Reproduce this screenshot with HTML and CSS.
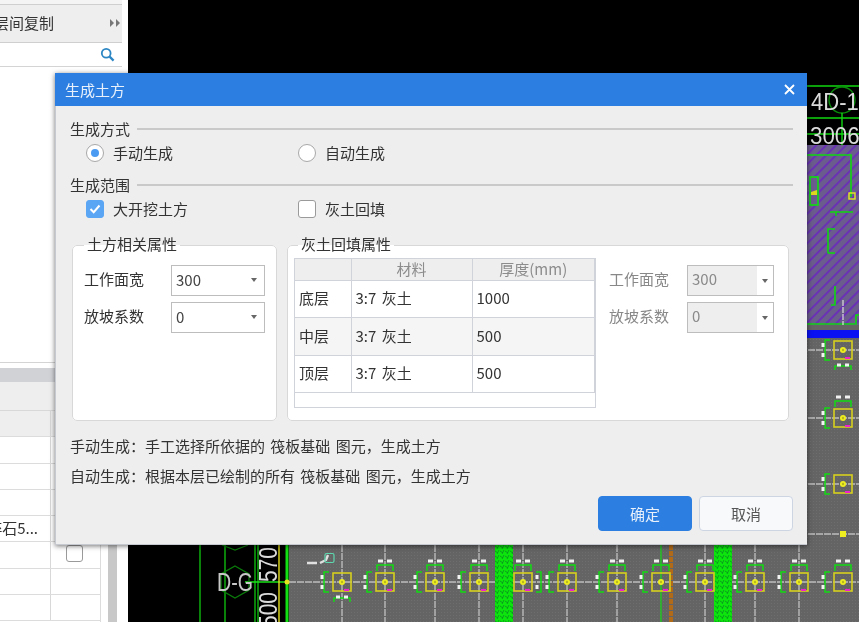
FILE: index.html
```html
<!DOCTYPE html>
<html lang="zh-CN">
<head>
<meta charset="utf-8">
<title>生成土方</title>
<link rel="stylesheet" href="styles.css">
</head>
<body>
<div class="desktop">
  <aside class="panel">
    <div class="panel-top"></div>
    <div class="copy-row"><span class="copy-text">层间复制</span>
      <svg class="more" width="10" height="8" viewBox="0 0 10 8"><path d="M0 0l4 4-4 4zM6 0l4 4-4 4z"/></svg>
    </div>
    <div class="search-row">
      <svg width="15" height="15" viewBox="0 0 15 15"><circle cx="6.2" cy="6.2" r="4.4" fill="none" stroke="#2d86c4" stroke-width="1.8"/><path d="M9.6 9.6l4 4" stroke="#2d86c4" stroke-width="2.2"/></svg>
    </div>
    <div class="panel-list"></div>
    <div class="panel-band"></div>
    <div class="panel-head"></div>
    <div class="panel-lower">
      <div class="prop-table">
        <div class="prop-row prop-header"><span class="prop-a"></span><span class="prop-b"></span></div>
        <div class="prop-row"><span class="prop-a"></span><span class="prop-b"></span></div>
        <div class="prop-row"><span class="prop-a"></span><span class="prop-b"></span></div>
        <div class="prop-row"><span class="prop-a"></span><span class="prop-b"></span></div>
        <div class="prop-row"><span class="prop-a prop-text">碎石5...</span><span class="prop-b"></span></div>
        <div class="prop-row"><span class="prop-a"></span><span class="prop-b"><i class="prop-check"></i></span></div>
        <div class="prop-row"><span class="prop-a"></span><span class="prop-b"></span></div>
        <div class="prop-row"><span class="prop-a"></span><span class="prop-b"></span></div>
      </div>
      <div class="panel-scroll"></div>
    </div>
  </aside>

  <main class="canvas">
    <svg class="cad" width="731" height="622" viewBox="128 0 731 622">
      <defs>
        <pattern id="hatch" width="7" height="7" patternUnits="userSpaceOnUse" patternTransform="rotate(45)">
          <rect width="7" height="7" fill="#6a5c8c"/><rect width="1.8" height="7" fill="#6a2cba"/>
        </pattern>
        <pattern id="grain" width="3" height="3" patternUnits="userSpaceOnUse">
          <rect width="3" height="3" fill="#646464"/><rect width="1" height="1" fill="#6e6e6e"/>
        </pattern>
        <pattern id="leaf" width="5" height="5" patternUnits="userSpaceOnUse">
          <rect width="5" height="5" fill="#0ce60c"/><path d="M0 1l3 2M4 0l-2 4" stroke="#0a8a20" stroke-width=".8"/>
        </pattern>
        <g id="col">
          <rect x="-9" y="-9" width="18" height="18" fill="none" stroke="#d6cf1e" stroke-width="1.6"/>
          <circle r="3" fill="#eeee20"/><circle r="1.2" fill="#b8b820"/>
          <path d="M2 8h5" stroke="#f020d0" stroke-width="2"/>
        </g>
        <g id="bl">
          <path d="M-13-10h-5v20h5" fill="none" stroke="#12dc12" stroke-width="1.5"/>
          <path d="M-20-7v4M-20 3v4" stroke="#f2f2f2" stroke-width="3"/>
        </g>
        <g id="br">
          <path d="M13-10h5v20h-5" fill="none" stroke="#12dc12" stroke-width="1.5"/>
          <path d="M14-7v4M14 3v4" stroke="#f2f2f2" stroke-width="3"/>
        </g>
        <g id="bt">
          <path d="M-8-11v-6h16v6" fill="none" stroke="#12dc12" stroke-width="1.5"/>
          <path d="M-7-21h5M2-21h5" stroke="#f2f2f2" stroke-width="3"/>
        </g>
        <g id="bb">
          <path d="M-8 20v-4h16v4" fill="none" stroke="#12dc12" stroke-width="1.5"/>
          <path d="M-6 15h4M2 15h4" stroke="#f2f2f2" stroke-width="3"/>
        </g>
      </defs>

      <rect x="128" y="0" width="731" height="622" fill="#000"/>

      <!-- upper right: axis labels -->
      <g fill="none" stroke="#10d810" stroke-width="1.4">
        <path d="M807 86H859M807 118H859M807 134H859"/>
        <circle cx="842" cy="100" r="13" stroke="#0a8a0a"/>
        <path d="M842 113V145"/>
      </g>
      <text class="cad-label" x="811" y="110" textLength="60" lengthAdjust="spacingAndGlyphs">4D-15</text>
      <text class="cad-label" x="810" y="144" textLength="62" lengthAdjust="spacingAndGlyphs">30060</text>

      <!-- hatched slab -->
      <rect x="800" y="145" width="59" height="180" fill="url(#hatch)"/>
      <path d="M807 155H851V197" fill="none" stroke="#10d810" stroke-width="1.6"/>
      <rect x="849" y="193" width="6" height="6" fill="none" stroke="#e8e820" stroke-width="1.4"/>
      <rect x="810" y="177" width="8" height="28" fill="#6a5c8c" stroke="#10e010" stroke-width="1.6"/>
      <path d="M811 192l6-2v5h-6z" fill="#e0d820"/>
      <g fill="none" stroke="#10d810" stroke-width="1.6">
        <path d="M830 212H853M836 212v4"/>
        <path d="M835 229h-7v24h7"/>
        <path d="M835 286v19h-4"/>
        <path d="M800 324H856V315H859"/>
      </g>
      <path d="M843 300V622" stroke="#dcdcdc" stroke-width="1.2" stroke-dasharray="6 1"/>
      <rect x="800" y="325" width="59" height="5" fill="#646464"/>
      <rect x="800" y="330" width="59" height="8" fill="#0a12f4"/>

      <!-- lower grey field -->
      <rect x="800" y="338" width="59" height="207" fill="url(#grain)"/>
      <rect x="289" y="545" width="570" height="77" fill="url(#grain)"/>

      <g stroke="#e8e8e8" stroke-width="1.2" stroke-dasharray="7 1">
        <path d="M800 350H859M800 418H859M800 484H859M800 534H859"/>
        <path d="M289 582H859"/>
      </g>
      <path d="M342 545V622M385 545V622M435 545V622M479 545V622M523 545V622M567 545V622M617 545V622M705 545V622M755 545V622M799 545V622" stroke="#c8c8c8" stroke-width="1.2" stroke-dasharray="7 1"/>
      <path d="M661 545V622" stroke="#12dc12" stroke-width="1.2"/>
      <path d="M671 545V622" stroke="#b06a18" stroke-width="4" stroke-dasharray="5 1"/>
      <rect x="495" y="545" width="18" height="77" fill="url(#leaf)"/>
      <rect x="714" y="545" width="18" height="77" fill="url(#leaf)"/>

      <rect x="840" y="531" width="6" height="6" fill="#eeee20"/>
      <use href="#col" x="843" y="350"/><use href="#bl" x="843" y="350"/><use href="#bb" x="843" y="350"/>
      <use href="#col" x="843" y="418"/><use href="#bl" x="843" y="418"/><use href="#bt" x="843" y="418"/>
      <use href="#col" x="843" y="484"/><use href="#bl" x="843" y="484"/>

      <use href="#col" x="342" y="582"/><use href="#bl" x="342" y="582"/><use href="#bb" x="342" y="582"/>
      <use href="#col" x="385" y="582"/><use href="#bl" x="385" y="582"/><use href="#bt" x="385" y="582"/>
      <use href="#col" x="435" y="582"/><use href="#bl" x="435" y="582"/><use href="#bt" x="435" y="582"/>
      <use href="#col" x="479" y="582"/><use href="#bl" x="479" y="582"/><use href="#bt" x="479" y="582"/>
      <use href="#col" x="523" y="582"/><use href="#br" x="523" y="582"/><use href="#bt" x="523" y="582"/>
      <use href="#col" x="567" y="582"/><use href="#bl" x="567" y="582"/><use href="#bt" x="567" y="582"/>
      <use href="#col" x="617" y="582"/><use href="#bl" x="617" y="582"/><use href="#bt" x="617" y="582"/>
      <use href="#col" x="661" y="582"/><use href="#bl" x="661" y="582"/><use href="#bt" x="661" y="582"/>
      <use href="#col" x="705" y="582"/><use href="#bl" x="705" y="582"/><use href="#bt" x="705" y="582"/>
      <use href="#col" x="755" y="582"/><use href="#bl" x="755" y="582"/><use href="#bt" x="755" y="582"/>
      <use href="#col" x="799" y="582"/><use href="#bl" x="799" y="582"/><use href="#bt" x="799" y="582"/>
      <use href="#col" x="843" y="582"/><use href="#bl" x="843" y="582"/><use href="#bt" x="843" y="582"/>

      <path d="M307 563h10M320 563l6-3 2-5" fill="none" stroke="#e0e0e0" stroke-width="2.4"/>
      <rect x="325" y="553.500" width="9" height="9" rx="1.500" fill="none" stroke="#5ed8ae" stroke-width="1.200"/>

      <!-- lower left: axis bubble and dimensions -->
      <g fill="none" stroke="#10c810" stroke-width="1.300">
        <path d="M200 545V622M225 545V622M255 545V622M258 545V622"/>
        <path d="M245 582H287" stroke="#18e018"/>
        <path d="M235 566l14 8v16l-14 8-14-8v-16z" stroke="#0a7a0a"/>
        <path d="M222 545l13 5 13-5" stroke="#0a7a0a"/>
      </g>
      <path d="M279 545V622" stroke="#e6e020" stroke-width="1.400"/>
      <path d="M287 545V622" stroke="#12e012" stroke-width="3"/>
      <circle cx="287" cy="582" r="2.500" fill="#e6e020"/>
      <text class="cad-label cad-axis" x="217" y="591" textLength="36" lengthAdjust="spacingAndGlyphs">D-G</text>
      <text class="cad-label cad-dim" transform="translate(277 582) rotate(-90)" textLength="35" lengthAdjust="spacingAndGlyphs">570</text>
      <text class="cad-label cad-dim" transform="translate(277 627) rotate(-90)" textLength="35" lengthAdjust="spacingAndGlyphs">500</text>
    </svg>
  </main>

  <section class="dialog">
    <header class="dialog-title">
      <span>生成土方</span>
      <svg width="11" height="11" viewBox="0 0 11 11"><path d="M1 1l9 9M10 1l-9 9" stroke="#fff" stroke-width="1.800"/></svg>
    </header>
    <div class="dialog-body">
      <div class="section-label"><span>生成方式</span><i class="rule"></i></div>
      <div class="options">
        <label class="option"><i class="radio radio-on"></i>手动生成</label>
        <label class="option"><i class="radio"></i>自动生成</label>
      </div>
      <div class="section-label section-next"><span>生成范围</span><i class="rule"></i></div>
      <div class="options">
        <label class="option"><i class="check check-on"><svg width="12" height="10" viewBox="0 0 12 10"><path d="M1.500 5l3.200 3.200L10.500 1.500" fill="none" stroke="#fff" stroke-width="2"/></svg></i>大开挖土方</label>
        <label class="option"><i class="check"></i>灰土回填</label>
      </div>

      <div class="groups">
        <fieldset class="group group-left">
          <legend>土方相关属性</legend>
          <div class="fields">
            <div class="field"><span>工作面宽</span><div class="combo"><span class="combo-value">300</span><i class="caret"></i></div></div>
            <div class="field"><span>放坡系数</span><div class="combo"><span class="combo-value">0</span><i class="caret"></i></div></div>
          </div>
        </fieldset>
        <fieldset class="group group-right">
          <legend>灰土回填属性</legend>
          <div class="group-row">
            <div class="layer-wrap">
              <table class="layers">
                <thead><tr><th></th><th>材料</th><th>厚度(mm)</th></tr></thead>
                <tbody>
                  <tr><td>底层</td><td>3:7 灰土</td><td>1000</td></tr>
                  <tr class="alt"><td>中层</td><td>3:7 灰土</td><td>500</td></tr>
                  <tr><td>顶层</td><td>3:7 灰土</td><td>500</td></tr>
                </tbody>
              </table>
            </div>
            <div class="fields fields-off">
              <div class="field"><span>工作面宽</span><div class="combo combo-off"><span class="combo-value">300</span><i class="caret"></i></div></div>
              <div class="field"><span>放坡系数</span><div class="combo combo-off"><span class="combo-value">0</span><i class="caret"></i></div></div>
            </div>
          </div>
        </fieldset>
      </div>

      <p class="note note-first">手动生成&#xFF1A;手工选择所依据的 筏板基础 图元&#xFF0C;生成土方</p>
      <p class="note note-second">自动生成&#xFF1A;根据本层已绘制的所有 筏板基础 图元&#xFF0C;生成土方</p>

      <div class="actions">
        <button class="btn btn-primary" type="button">确定</button>
        <button class="btn" type="button">取消</button>
      </div>
    </div>
  </section>
</div>
</body>
</html>
```

FILE: styles.css
```css
* { box-sizing: border-box; }
html, body { margin: 0; padding: 0; }
body {
  font-family: "Noto Sans CJK SC", "Noto Sans", sans-serif;
  font-size: 14px;
  color: #333;
  background: #000;
}
i { font-style: normal; display: block; }

.desktop {
  position: relative;
  display: flex;
  width: 859px;
  height: 622px;
  overflow: hidden;
  filter: blur(.35px);
}

/* left panel */
.panel {
  display: flex;
  flex-direction: column;
  flex: 0 0 128px;
  height: 622px;
  background: #fff;
  overflow: hidden;
}
.panel-top { width: 122px; height: 5px; background: #f4f4f4; border-bottom: 1px solid #cfcfcf; }
.copy-row {
  width: 122px;
  height: 38px;
  display: flex;
  align-items: center;
  padding-bottom: 2px;
  background: #eee;
  border-bottom: 1px solid #cfcfcf;
}
.copy-text { margin-left: -6px; font-size: 15px; color: #333; }
.more { margin-left: auto; margin-right: 2px; fill: #777; }
.search-row {
  width: 122px;
  height: 24px;
  display: flex;
  align-items: center;
  justify-content: flex-end;
  padding-right: 7px;
  background: #fff;
  border-bottom: 1px solid #d4d4d4;
}
.panel-list { width: 122px; height: 296px; border-bottom: 1px solid #d4d4d4; }
.panel-band { width: 122px; height: 19px; border-top: 5px solid #fff; background: #d0d2d6; }
.panel-head { width: 122px; height: 28px; background: #eee; }
.panel-lower { flex: 1; display: flex; gap: 7px; }
.panel-scroll { width: 9px; flex: 0 0 9px; background: #c8c8c8; }
.prop-table { width: 101px; flex: 0 0 101px; border-top: 1px solid #d8d8d8; border-right: 1px solid #dcdcdc; }
.prop-row {
  display: flex;
  height: 26.250px;
  border-bottom: 1.500px solid #dcdcdc;
}
.prop-header { background: #eee; }
.prop-a {
  width: 51px;
  display: flex;
  align-items: center;
  justify-content: flex-end;
  padding: 0 12px 2px 0;
  border-right: 1px solid #d8d8d8;
  white-space: nowrap;
  font-size: 15px;
}
.prop-b { flex: 1; position: relative; }
.prop-check {
  position: absolute;
  left: 15px;
  top: 3px;
  width: 17px;
  height: 17px;
  border: 1px solid #9a9a9a;
  border-radius: 3px;
  background: #fff;
}

/* CAD canvas */
.canvas { flex: 1; background: #000; }
.cad { display: block; }
.cad-label {
  font-family: "Liberation Sans", sans-serif;
  font-size: 23px;
  fill: #dcdcdc;
}
.cad-axis { font-size: 25px; fill: #c8c8c8; }
.cad-dim { font-size: 26px; }

/* dialog */
.dialog {
  position: absolute;
  left: 55px;
  top: 73px;
  width: 752px;
  height: 472px;
  background: #eee;
  border-left: 1px solid #c6cad0;
  border-bottom: 1px solid #c6cad0;
  box-shadow: 0 1px 5px rgba(0, 0, 0, .55);
}
.dialog-title {
  height: 33px;
  margin-left: -1px;
  display: flex;
  align-items: center;
  justify-content: space-between;
  padding: 0 12px 0 10px;
  background: #2c7fe0;
  color: #e8f0fb;
  font-size: 15px;
}
.dialog-body { padding: 13px 14px 0; }

.section-label {
  display: flex;
  align-items: center;
  height: 20px;
  padding-bottom: 2px;
  font-size: 15px;
  color: #333;
  gap: 7px;
}
.section-next { margin-top: 12px; }
.rule { flex: 1; height: 1.500px; margin-top: 2px; background: #c9c9c9; }

.options { display: flex; height: 20px; margin-top: 4px; padding-left: 16px; }
.option {
  display: flex;
  align-items: center;
  width: 212px;
  padding-bottom: 2px;
  font-size: 15px;
  color: #333;
  gap: 9px;
}
.radio {
  width: 18px;
  height: 18px;
  margin-top: 2px;
  border: 1px solid #a8a8a8;
  border-radius: 50%;
  background: #fff;
}
.radio-on { display: flex; align-items: center; justify-content: center; }
.radio-on::after {
  content: "";
  width: 8px;
  height: 8px;
  border-radius: 50%;
  background: #4b9bf2;
}
.check {
  width: 18px;
  height: 18px;
  margin-top: 2px;
  border: 1px solid #9a9a9a;
  border-radius: 3px;
  background: #fff;
}
.check-on {
  display: flex;
  align-items: center;
  justify-content: center;
  background: #5aa5f4;
  border-color: #5aa5f4;
}

.groups { display: flex; gap: 10px; margin-top: 16px; padding-left: 2px; }
.group {
  margin: 0;
  height: 186px;
  padding: 3px 6px 0;
  min-width: 0;
  background: #fff;
  border: 1.500px solid #d8d8d8;
  border-radius: 5px;
}
.group legend {
  margin-left: 0;
  padding: 0 3px;
  height: 20px;
  line-height: 18px;
  font-size: 15px;
  color: #333;
}
.group-left { width: 205px; padding: 10px 11px 0; }
.group-right { width: 502px; }
.group-right legend { margin-left: 4px; }
.group-row { display: flex; }

.fields { display: flex; flex-direction: column; gap: 6px; }
.field {
  display: flex;
  align-items: center;
  justify-content: space-between;
  height: 31px;
  font-size: 15px;
  color: #333;
}
.field > span { position: relative; top: -2px; }
.combo {
  display: flex;
  align-items: center;
  justify-content: space-between;
  width: 94px;
  height: 31px;
  padding: 0 7px 2px 4px;
  background: #fff;
  border: 1.500px solid #bdbdbd;
  font-size: 15px;
  color: #444;
}
.caret {
  width: 0;
  height: 0;
  border-left: 3.500px solid transparent;
  border-right: 3.500px solid transparent;
  border-top: 4px solid #666;
}
.fields-off { flex: 0 0 165px; margin: 7px 0 0 13px; }
.fields-off .field { color: #888; }
.combo-off {
  width: 87px;
  padding: 0;
  color: #8a8a8a;
}
.combo-off .combo-value {
  flex: 1;
  height: 100%;
  padding-left: 4px;
  line-height: 26px;
  background: #eee;
}
.combo-off .caret { margin: 0 5px; }

.layer-wrap {
  width: 302px;
  height: 150px;
  flex: 0 0 302px;
  background: #fff;
  border: 1.500px solid #d0d4da;
}
.layers {
  width: 100%;
  table-layout: fixed;
  border-collapse: collapse;
  font-size: 15px;
  line-height: 18px;
  word-spacing: 2px;
  color: #333;
}
.layers th:nth-child(1), .layers td:nth-child(1) { width: 56px; }
.layers th:nth-child(2), .layers td:nth-child(2) { width: 121px; }
.layers th {
  height: 21px;
  padding: 0;
  background: #eee;
  font-weight: 400;
  color: #8c8c8c;
  border-right: 1.500px solid #d0d4da;
  border-bottom: 1.500px solid #d0d4da;
}
.layers td {
  height: 37.500px;
  padding: 0 4px 1px;
  border-right: 1.500px solid #d0d4da;
  border-bottom: 1.500px solid #d0d4da;
}
.layers .alt td { background: #f5f5f5; }

.note { margin: 0; font-size: 15px; line-height: 20px; word-spacing: 2px; color: #333; white-space: nowrap; }
.note-first { margin-top: 15px; }
.note-second { margin-top: 10px; }

.actions { display: flex; justify-content: flex-end; gap: 7px; margin-top: 10px; }
.btn {
  width: 94px;
  height: 35px;
  padding: 0;
  font: inherit;
  font-size: 15px;
  color: #555;
  background: #f8f9fb;
  border: 1.500px solid #cdd5e3;
  border-radius: 4px;
}
.btn-primary { background: #2c7fe0; border-color: #2c7fe0; color: #e8f0fb; }
```
